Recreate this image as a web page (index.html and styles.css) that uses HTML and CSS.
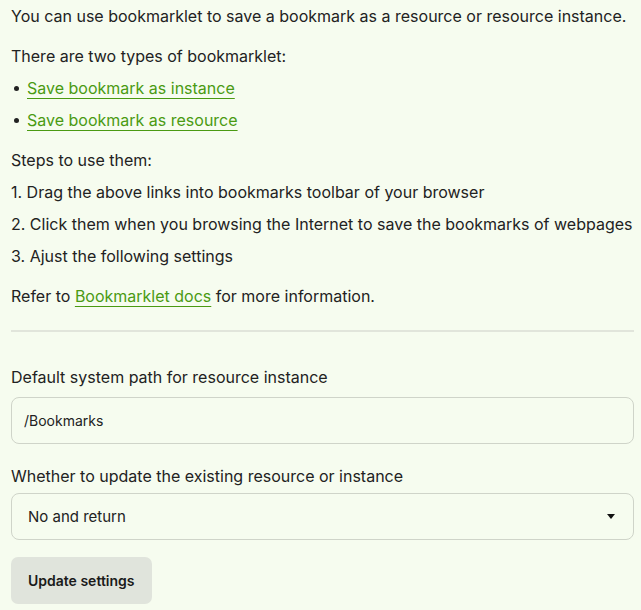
FILE: index.html
```html
<!DOCTYPE html>
<html lang="en">

<head>
    <meta charset="UTF-8">
    <title>Bookmarklet</title>
    <link rel="stylesheet" href="styles.css">
</head>

<body>
    <div class="page">
        <p class="para">You can use bookmarklet to save a bookmark as a resource or resource instance.</p>

        <p class="line">There are two types of bookmarklet:</p>
        <ul class="links">
            <li><span class="dot"></span><a href="#">Save bookmark as instance</a></li>
            <li><span class="dot"></span><a href="#">Save bookmark as resource</a></li>
        </ul>

        <p class="line">Steps to use them:</p>
        <ul class="steps">
            <li>1. Drag the above links into bookmarks toolbar of your browser</li>
            <li>2. Click them when you browsing the Internet to save the bookmarks of webpages</li>
            <li>3. Ajust the following settings</li>
        </ul>

        <p class="para">Refer to <a href="#">Bookmarklet docs</a> for more information.</p>

        <hr class="divider">

        <form class="settings">
            <label class="field">
                <span class="label">Default system path for resource instance</span>
                <input class="input" type="text" value="/Bookmarks">
            </label>
            <label class="field">
                <span class="label tight">Whether to update the existing resource or instance</span>
                <div class="select">
                    <span>No and return</span>
                    <svg class="caret" width="8" height="5" viewBox="0 0 8 5"><path d="M0 0h8L4 5z" fill="#111"/></svg>
                </div>
            </label>
            <button class="btn" type="button">Update settings</button>
        </form>
    </div>
</body>

</html>
```

FILE: styles.css
```css
body {
    margin: 0;
    background: #f6fcef;
    color: #222;
    font-family: Inter, "Noto Sans", sans-serif;
    font-size: 16px;
    line-height: 24px;
}

.page {
    padding: 4px 7px 0 11px;
}

p {
    margin: 0;
}

.para {
    margin-bottom: 16px;
}

.line {
    margin-bottom: 8px;
}

a {
    color: #4a9a12;
    text-decoration: underline;
    text-decoration-thickness: 1px;
    text-underline-offset: 4px;
}

.links,
.steps {
    list-style: none;
    margin: 0 0 16px;
    padding: 0;
}

.links li,
.steps li {
    margin-bottom: 8px;
}

.links li:last-child,
.steps li:last-child {
    margin-bottom: 0;
}

.links li {
    display: flex;
    align-items: center;
}

.dot {
    width: 5px;
    height: 5px;
    border-radius: 50%;
    background: #222;
    margin: 1px 8px 0 3px;
}

.divider {
    border: 0;
    height: 2px;
    background: #e1e5db;
    margin: 22px 0 33px;
}

.settings {
    display: flex;
    flex-direction: column;
    align-items: flex-start;
}

.field {
    display: flex;
    flex-direction: column;
    align-self: stretch;
    margin-bottom: 20px;
}

.label {
    margin-bottom: 8px;
}

.label.tight {
    margin-bottom: 5px;
}

.input,
.select {
    box-sizing: border-box;
    height: 47px;
    border: 1px solid #cfd4c9;
    border-radius: 8px;
    background: transparent;
    font-family: inherit;
    font-size: 14px;
    color: #222;
}

.input {
    padding: 0 12px;
    outline: none;
}

.select {
    display: flex;
    align-items: center;
    justify-content: space-between;
    padding: 0 18px 0 16px;
    font-size: 15px;
}

.btn {
    margin-top: -3px;
    height: 47px;
    padding: 0 17px;
    border: 0;
    border-radius: 7px;
    background: #e0e4dc;
    color: #1a1a1a;
    font-family: inherit;
    font-size: 14px;
    font-weight: 600;
}
```
